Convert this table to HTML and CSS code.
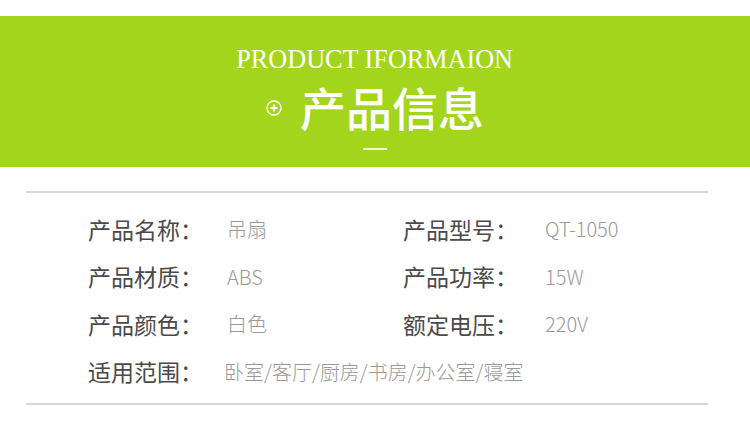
FILE: index.html
```html
<!DOCTYPE html>
<html lang="zh-CN">
<head>
    <meta charset="UTF-8">
    <title>产品信息</title>
    <link rel="stylesheet" href="styles.css">
</head>
<body>
    <div class="banner">
        <div class="banner-en">PRODUCT IFORMAION</div>
        <div class="banner-title">
            <svg class="plus-icon" width="16" height="16" viewBox="0 0 16 16">
                <circle cx="8" cy="8" r="7" fill="none" stroke="#fff" stroke-width="1.3"/>
                <path d="M8 4.5v7M4.5 8h7" stroke="#fff" stroke-width="1.8"/>
            </svg>
            <h1>产品信息</h1>
        </div>
        <div class="banner-dash"></div>
    </div>

    <div class="info">
        <div class="info-grid">
            <div class="label">产品名称：</div>
            <div class="value">吊扇</div>
            <div class="label">产品型号：</div>
            <div class="value">QT-1050</div>

            <div class="label">产品材质：</div>
            <div class="value">ABS</div>
            <div class="label">产品功率：</div>
            <div class="value">15W</div>

            <div class="label">产品颜色：</div>
            <div class="value">白色</div>
            <div class="label">额定电压：</div>
            <div class="value">220V</div>

            <div class="label">适用范围：</div>
            <div class="value wide">卧室/客厅/厨房/书房/办公室/寝室</div>
        </div>
    </div>
</body>
</html>
```

FILE: styles.css
```css
body {
    margin: 0;
    padding-top: 16px;
    background: #fff;
    font-family: "Noto Sans CJK SC", "Noto Sans", sans-serif;
}

.banner {
    height: 151px;
    background: #a3d51c;
    color: #fff;
    display: flex;
    flex-direction: column;
    align-items: center;
}

.banner-en {
    margin-top: 28px;
    font-family: "Liberation Serif", serif;
    font-size: 27px;
    line-height: 30px;
    transform: scaleX(0.97);
}

.banner-title {
    display: flex;
    align-items: center;
    margin-top: 4px;
}

.plus-icon {
    margin-right: 18px;
    margin-top: 4px;
}

.banner-title h1 {
    margin: 0;
    font-size: 46px;
    font-weight: 500;
    line-height: 56px;
}

.banner-dash {
    width: 24px;
    height: 2px;
    background: #f4f8d8;
    margin-top: 14px;
}

.info {
    margin: 24px 42px 0 26px;
    border-top: 2px solid #d8d8d8;
    border-bottom: 2px solid #d8d8d8;
    padding: 12px 0 8px 62px;
}

.info-grid {
    display: grid;
    grid-template-columns: 139px 176px 142px auto;
    grid-auto-rows: 47.5px;
    align-items: center;
}

.label {
    font-size: 23px;
    color: #4a4a4a;
}

.value {
    font-size: 20px;
    font-weight: 300;
    color: #999;
}

.wide {
    grid-column: 2 / 5;
    margin-left: -3px;
}
```
